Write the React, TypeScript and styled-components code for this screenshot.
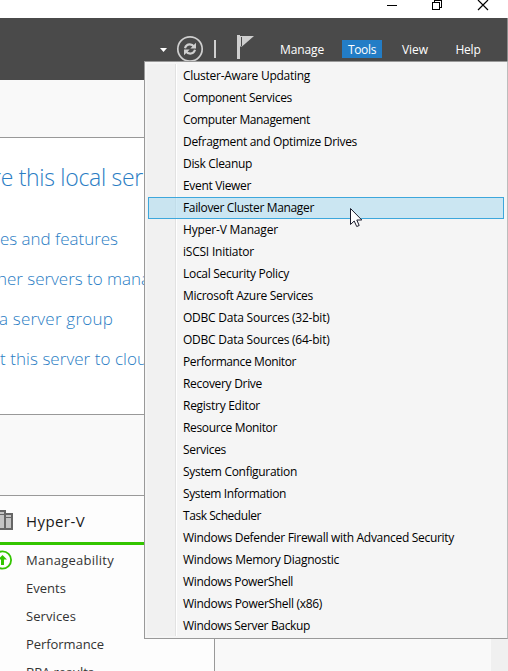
import React, { useLayoutEffect, useRef } from "react";
import styled, { createGlobalStyle } from "styled-components";

const GlobalStyle = createGlobalStyle`
  * { box-sizing: border-box; }
  body { margin: 0; overflow: hidden; }
`;

const Window = styled.div`
  position: relative;
  width: 508px;
  height: 671px;
  overflow: hidden;
  display: flex;
  flex-direction: column;
  background: #fff;
  font-family: "Open Sans", "Noto Sans", sans-serif;
  font-size: 12px;
  color: #1a1a1a;
`;

const TitleBar = styled.div`
  flex: none;
  height: 18px;
  background: #fff;
  svg { display: block; }
`;

const CommandBar = styled.header`
  flex: none;
  height: 62px;
  display: flex;
  align-items: flex-start;
  background: #4a4a4a;
  border-right: 1px solid #8c8c8c;
  svg { flex: none; }
`;

const BarButton = styled.button<{ $width: number; $gap?: number; $active?: boolean }>`
  flex: none;
  width: ${(p) => p.$width}px;
  height: 18px;
  margin: 22px 0 0 ${(p) => p.$gap ?? 0}px;
  padding: 2px 0 0;
  border: 0;
  display: flex;
  align-items: center;
  justify-content: center;
  background: ${(p) => (p.$active ? "#237dc6" : "transparent")};
  color: #fff;
  font: 500 12px/18px "Open Sans", sans-serif;
`;

const Content = styled.main`
  flex: 1;
  display: flex;
  flex-direction: column;
  background: #f9f9f9;
`;

const Welcome = styled.section`
  flex: none;
  height: 278px;
  margin-top: 57px;
  border: solid #999;
  border-width: 1px 0;
  background: #fff;
  color: #2a7dc4;
  font-weight: 300;
  overflow: hidden;
  white-space: nowrap;
`;

const WelcomeTitle = styled.h1<{ $shift: number }>`
  margin: 22px 0 25px ${(p) => p.$shift}px;
  font-size: 23px;
  line-height: 34px;
  font-weight: 300;
`;

const Task = styled.div<{ $shift: number }>`
  margin-left: ${(p) => p.$shift}px;
  height: 40px;
  font-size: 17px;
  line-height: 40px;
`;

const Dashboard = styled.section`
  flex: 1;
  margin-top: 80px;
  display: flex;
  justify-content: space-between;
  min-height: 0;
`;

const Tile = styled.article`
  width: 215px;
  border-top: 1px solid #999;
  border-right: 1px solid #999;
  background: #fdfdfd;
  overflow: hidden;
`;

const TileHeader = styled.div`
  height: 49px;
  display: flex;
  align-items: center;
  border-bottom: 3px solid #33c500;
  padding-top: 3px;
  font-size: 15px;
`;

const TileRow = styled.div`
  height: 28px;
  display: flex;
  align-items: center;
  font-size: 13px;
  color: #333;
  &:nth-child(2) { margin-top: 1px; }
`;

const IconSlot = styled.span`
  flex: none;
  width: 26px;
  height: 22px;
  svg { display: block; }
`;

const ScrollTrack = styled.div`
  width: 17px;
  background: #f0f0f0;
`;

const Menu = styled.div`
  position: absolute;
  left: 144px;
  top: 61px;
  width: 364px;
  height: 578px;
  padding: 3px;
  border: 1px solid #999;
  border-right-color: #bcbcbc;
  background: linear-gradient(90deg, #f1f1f1 28px, #e2e2e2 28px, #e2e2e2 29px, #fff 29px, #fff 30px, #f5f5f5 30px)
    2px 2px / 100% 572px no-repeat #f5f5f5;
`;

const MenuItem = styled.div<{ $active?: boolean }>`
  height: 22px;
  width: 356px;
  padding: 0 0 2px 34px;
  display: flex;
  align-items: center;
  border: 1px solid ${(p) => (p.$active ? "#3da7dc" : "transparent")};
  background: ${(p) => (p.$active ? "rgba(168, 216, 238, 0.55)" : "transparent")};
  color: #000;
  font-size: 12px;
`;

const Text = styled.span`
  display: inline-block;
  white-space: nowrap;
`;

const Pointer = styled.svg`
  position: absolute;
  left: 350px;
  top: 208px;
`;

/** Text whose tracking is adjusted so that it fills the given width. */
function Fitted({ width, children }: { width: number; children: string }) {
  const ref = useRef<HTMLSpanElement>(null);
  useLayoutEffect(() => {
    const el = ref.current;
    if (!el) return;
    el.style.letterSpacing = "0px";
    const natural = el.getBoundingClientRect().width;
    el.style.letterSpacing = `${(width - natural) / children.length}px`;
  }, [width, children]);
  return <Text ref={ref}>{children}</Text>;
}

const tools: [string, number][] = [
  ["Cluster-Aware Updating", 127],
  ["Component Services", 109],
  ["Computer Management", 127],
  ["Defragment and Optimize Drives", 174],
  ["Disk Cleanup", 69],
  ["Event Viewer", 68],
  ["Failover Cluster Manager", 131],
  ["Hyper-V Manager", 95],
  ["iSCSI Initiator", 71],
  ["Local Security Policy", 106],
  ["Microsoft Azure Services", 130],
  ["ODBC Data Sources (32-bit)", 146.5],
  ["ODBC Data Sources (64-bit)", 146.5],
  ["Performance Monitor", 113],
  ["Recovery Drive", 79],
  ["Registry Editor", 77],
  ["Resource Monitor", 94],
  ["Services", 43],
  ["System Configuration", 114],
  ["System Information", 103],
  ["Task Scheduler", 78],
  ["Windows Defender Firewall with Advanced Security", 271],
  ["Windows Memory Diagnostic", 156],
  ["Windows PowerShell", 110],
  ["Windows PowerShell (x86)", 139],
  ["Windows Server Backup", 127],
];

const tasks = [
  { text: "es and features", width: 118, shift: 0 },
  { text: "her servers to mana", width: 153, shift: -3 },
  { text: "a server group", width: 114, shift: -1 },
  { text: "ct this server to clou", width: 155, shift: -8 },
];

const roleRows: [string, number][] = [
  ["Events", 40],
  ["Services", 50],
  ["Performance", 78],
  ["BPA results", 68],
];

const WindowControls = () => (
  <svg width="508" height="18" fill="none" stroke="#000" shapeRendering="crispEdges">
    <path d="M387 5.5h10" />
    <path d="M432.500 2.500h7v7h-7zM434.500 2V.5h7v7H440" />
    <path d="M478 0l10 10M488 0l-10 10" shapeRendering="auto" strokeWidth="1.200" />
  </svg>
);

const BarIcons = () => (
  <svg width="272" height="62" fill="none">
    <path d="M160 30h7l-3.500 4z" fill="#fff" />
    <circle cx="190" cy="31" r="12.200" stroke="#cfcfcf" strokeWidth="1.700" />
    <g stroke="#cfcfcf" strokeWidth="2.200">
      <path d="M185 30.200c.8-2.700 2.600-3.800 4.800-3.800 1.900 0 3.300.8 4.200 2.200" />
      <path d="M195 31.800c-.8 2.700-2.600 3.800-4.800 3.800-1.900 0-3.300-.8-4.200-2.200" />
    </g>
    <path d="M196 24.800v5.700h-5.700zM184 37.200v-5.700h5.700z" fill="#cfcfcf" />
    <path d="M214 22h2v18h-2z" fill="#cfcfcf" />
    <path d="M237 17h3v24h-3z" fill="#cfcfcf" />
    <path d="M240 18h14l-12 10.500h-2z" fill="#cfcfcf" />
    <path d="M241.500 19v9" stroke="#4a4a4a" />
  </svg>
);

const ServerIcon = () => (
  <svg width="26" height="22">
    <path d="M-4 0H6v3h7v17H-4z" fill="#666" />
    <path d="M-3 2h7v2h-7zM-3 5h7v13h-7zM6 5h5v2H6zM6 8h5v10H6z" fill="#c4c4c4" />
    <path d="M-1 5h1v13h-1z" fill="#777" />
  </svg>
);

const StatusIcon = () => (
  <svg width="26" height="22">
    <circle cx="2.500" cy="11" r="8.600" fill="#fff" stroke="#33c500" strokeWidth="1.800" />
    <path d="M2.500 6L7 10.500H4V16H1v-5.500h-3z" fill="#33c500" />
  </svg>
);

export default function App() {
  return (
    <Window>
      <GlobalStyle />
      <TitleBar>
        <WindowControls />
      </TitleBar>
      <CommandBar>
        <BarIcons />
        <BarButton $width={60}><Fitted width={44}>Manage</Fitted></BarButton>
        <BarButton $width={40} $gap={10} $active><Fitted width={28}>Tools</Fitted></BarButton>
        <BarButton $width={40} $gap={13}><Fitted width={26}>View</Fitted></BarButton>
        <BarButton $width={40} $gap={13}><Fitted width={25}>Help</Fitted></BarButton>
      </CommandBar>
      <Content>
        <Welcome>
          <WelcomeTitle $shift={-8}><Fitted width={151}>re this local ser</Fitted></WelcomeTitle>
          {tasks.map((t) => (
            <Task key={t.text} $shift={t.shift}>
              <Fitted width={t.width}>{t.text}</Fitted>
            </Task>
          ))}
        </Welcome>
        <Dashboard>
          <Tile>
            <TileHeader>
              <IconSlot><ServerIcon /></IconSlot>
              <Fitted width={59}>Hyper-V</Fitted>
            </TileHeader>
            <TileRow>
              <IconSlot><StatusIcon /></IconSlot>
              <Fitted width={88}>Manageability</Fitted>
            </TileRow>
            {roleRows.map(([text, width]) => (
              <TileRow key={text}>
                <IconSlot />
                <Fitted width={width}>{text}</Fitted>
              </TileRow>
            ))}
          </Tile>
          <ScrollTrack />
        </Dashboard>
      </Content>
      <Menu>
        {tools.map(([text, width], i) => (
          <MenuItem key={text} $active={i === 6}>
            <Fitted width={width}>{text}</Fitted>
          </MenuItem>
        ))}
      </Menu>
      <Pointer width="14" height="21">
        <path d="M.5.5v16l3.700-3.500 2.500 5.500 2.500-1-2.400-5.500h5z" fill="#fff" stroke="#1b1b2b" />
      </Pointer>
    </Window>
  );
}
